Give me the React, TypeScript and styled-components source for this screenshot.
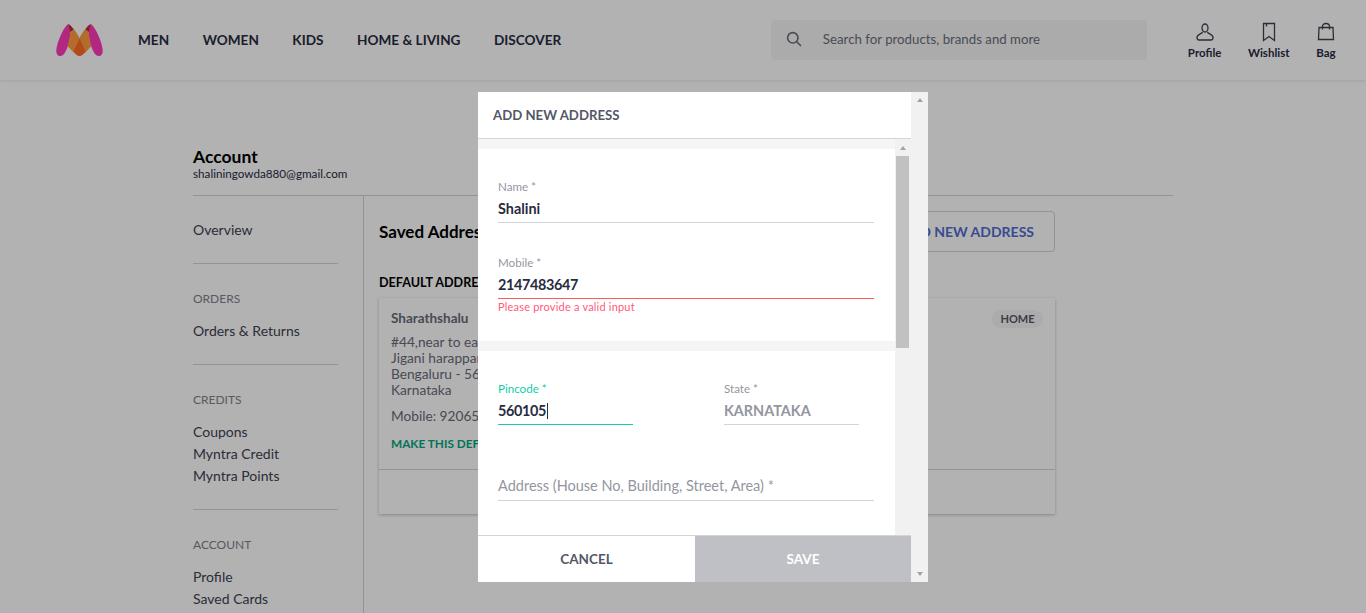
import React from 'react';
import styled, { createGlobalStyle } from 'styled-components';

const GlobalStyle = createGlobalStyle`
  html, body {
    margin: 0;
    height: 100%;
    overflow: hidden;
    background: #fff;
    color: #282c3f;
    font-family: Lato, "Open Sans", Arial, sans-serif;
  }
  * {
    box-sizing: border-box;
  }
`;

const Page = styled.div`
  height: 100vh;
  overflow: hidden;
`;

const Header = styled.header`
  display: flex;
  align-items: center;
  height: 80px;
  padding: 0 30px 0 56px;
  background: #fff;
  box-shadow: 0 1px 3px rgba(0, 0, 0, 0.1);
`;

const Logo = styled.svg`
  width: 47px;
  height: 33px;
  flex: none;
  margin-top: 1px;
`;

const Nav = styled.nav`
  display: flex;
  gap: 33.5px;
  margin-left: 35px;
`;

const NavLink = styled.a`
  font-size: 13.6px;
  font-weight: 700;
  text-transform: uppercase;
  white-space: nowrap;
`;

const Search = styled.div`
  display: flex;
  align-items: center;
  gap: 21px;
  width: 376px;
  height: 40px;
  margin-left: auto;
  padding: 0 0 3px 15px;
  border-radius: 4px;
  background: #f5f5f6;
  color: #696e79;
  font-size: 13.25px;
`;

const Actions = styled.div`
  display: flex;
  gap: 26.5px;
  margin: 2px 0 0 41px;
`;

const Action = styled.div`
  display: flex;
  flex-direction: column;
  align-items: center;
  gap: 3px;
  font-size: 11.5px;
  font-weight: 700;
  line-height: 16px;
`;

const ActionIcon = styled.svg`
  width: 20px;
  height: 20px;
  fill: none;
  stroke: #3e4152;
  stroke-width: 1.3;
`;

const Container = styled.div`
  width: 980px;
  margin: 0 auto;
  padding-top: 67px;
`;

const AccountHead = styled.div`
  height: 49px;
  border-bottom: 1px solid #d4d5d9;
`;

const AccountTitle = styled.div`
  font-size: 17.5px;
  font-weight: 700;
  line-height: 20px;
  color: #000;
`;

const AccountEmail = styled.div`
  margin-top: -1px;
  font-size: 11.7px;
  line-height: 14px;
`;

const Columns = styled.div`
  display: grid;
  grid-template-columns: 171px 1fr;
`;

const Sidebar = styled.aside`
  padding: 23px 25px 40px 0;
  border-right: 1px solid #d4d5d9;
`;

const SideGroup = styled.div`
  padding-bottom: 22px;
  margin-bottom: 27px;
  border-bottom: 1px solid #d4d5d9;
`;

const SideHeading = styled.div`
  margin-bottom: 13px;
  color: #7e818c;
  font-size: 12px;
  line-height: 16px;
`;

const SideItem = styled.div`
  font-size: 14px;
  line-height: 22px;
  color: #3e4152;
`;

const Main = styled.main`
  width: 691px;
  padding: 15px 0 0 15px;
`;

const TitleRow = styled.div`
  display: flex;
  align-items: center;
  justify-content: space-between;
  margin-bottom: 23px;
`;

const MainTitle = styled.h1`
  margin: 0;
  font-size: 17px;
  font-weight: 700;
  color: #000;
`;

const AddButton = styled.button`
  height: 41px;
  padding: 0 20px;
  border: 1px solid #d4d5d9;
  border-radius: 4px;
  background: transparent;
  color: #526cd0;
  font: 700 14px Lato, sans-serif;
`;

const GroupLabel = styled.div`
  margin-bottom: 7px;
  font-size: 12.6px;
  font-weight: 700;
  line-height: 16px;
  color: #000;
`;

const Card = styled.section`
  position: relative;
  height: 216px;
  padding: 12px;
  box-shadow: 0 1px 3px rgba(0, 0, 0, 0.25);
`;

const CardName = styled.div`
  margin-bottom: 8px;
  font-size: 13.5px;
  font-weight: 700;
  line-height: 16px;
  color: #696b79;
`;

const CardLine = styled.div`
  font-size: 13.7px;
  line-height: 16px;
  color: #696b79;
`;

const CardMobile = styled(CardLine)`
  margin-top: 10px;
`;

const MakeDefault = styled.div`
  margin-top: 12px;
  font-size: 11.8px;
  font-weight: 700;
  line-height: 16px;
  color: #03a685;
`;

const CardFooter = styled.div`
  position: absolute;
  left: 0;
  right: 0;
  bottom: 0;
  height: 45px;
  border-top: 1px solid #d4d5d9;
`;

const Tag = styled.span`
  position: absolute;
  top: 12px;
  right: 12px;
  padding: 0 8.5px;
  border-radius: 9px;
  background: #f5f5f6;
  font-size: 11px;
  font-weight: 700;
  line-height: 18px;
  color: #535766;
`;

const Overlay = styled.div`
  position: fixed;
  inset: 0;
  background: rgba(0, 0, 0, 0.3);
`;

const Modal = styled.div`
  position: absolute;
  top: 92px;
  left: 478px;
  display: flex;
  width: 450px;
  height: 490px;
  background: #fff;
`;

const ModalColumn = styled.div`
  display: flex;
  flex-direction: column;
  width: 433px;
`;

const ModalHead = styled.div`
  display: flex;
  align-items: center;
  flex: none;
  height: 47px;
  padding-left: 15px;
  border-bottom: 1px solid #d4d5d9;
  color: #535766;
  font-size: 13.2px;
  font-weight: 700;
`;

const ModalBody = styled.div`
  display: flex;
  flex: 1;
  min-height: 0;
`;

const Sections = styled.div`
  display: flex;
  flex-direction: column;
  gap: 10px;
  flex: 1;
  padding-top: 10px;
  overflow: hidden;
  background: #f5f5f6;
`;

const Section = styled.div<{ $height?: number; $top: number }>`
  flex: ${props => (props.$height ? 'none' : 1)};
  height: ${props => (props.$height ? `${props.$height}px` : 'auto')};
  padding: ${props => props.$top}px 21px 0 20px;
  background: #fff;
`;

const Field = styled.div<{ $width?: number; $gap?: number }>`
  width: ${props => (props.$width ? `${props.$width}px` : '100%')};
  margin-bottom: ${props => props.$gap ?? 0}px;
`;

const FieldLabel = styled.div<{ $focused?: boolean }>`
  height: 14px;
  font-size: 11.6px;
  line-height: 14px;
  color: ${props => (props.$focused ? '#14cda8' : '#94969f')};
`;

const FieldValue = styled.div<{
  $muted?: boolean;
  $empty?: boolean;
  $focused?: boolean;
  $error?: boolean;
  $numeric?: boolean;
}>`
  display: flex;
  align-items: center;
  height: 29px;
  padding: ${props => (props.$empty ? '0 0 1px' : '1px 0 0')};
  border-bottom: 1px solid
    ${props => (props.$error ? '#ff5a5a' : props.$focused ? '#14cda8' : '#d4d5d9')};
  color: ${props => (props.$empty || props.$muted ? '#94969f' : '#282c3f')};
  font-size: ${props => (props.$empty ? 14.5 : 14.4)}px;
  font-weight: ${props => (props.$empty ? 400 : 700)};
  letter-spacing: ${props => (props.$numeric ? '-0.35px' : 0)};
`;

const Caret = styled.span`
  width: 1px;
  height: 16px;
  margin-left: 1px;
  background: #282c3f;
`;

const FieldError = styled.div`
  margin-top: 1px;
  font-size: 11px;
  line-height: 14px;
  letter-spacing: 0.2px;
  color: #ff5a7a;
`;

const FieldRow = styled.div`
  display: flex;
  gap: 91px;
  margin-bottom: 47px;
`;

const Track = styled.div<{ $width: number }>`
  position: relative;
  flex: none;
  width: ${props => props.$width}px;
  background: #f1f1f1;
`;

const Thumb = styled.div`
  position: absolute;
  top: 17px;
  left: 1px;
  right: 2px;
  height: 192px;
  background: #c1c1c1;
`;

const Arrow = styled.span<{ $down?: boolean; $top: number }>`
  position: absolute;
  left: 50%;
  top: ${props => (props.$top >= 0 ? `${props.$top}px` : 'auto')};
  bottom: ${props => (props.$top < 0 ? `${-props.$top}px` : 'auto')};
  margin-left: -3px;
  border-left: 3.5px solid transparent;
  border-right: 3.5px solid transparent;
  border-bottom: ${props => (props.$down ? 0 : '4px solid #a3a3a3')};
  border-top: ${props => (props.$down ? '4px solid #a3a3a3' : 0)};
`;

const ModalFoot = styled.div`
  display: grid;
  grid-template-columns: 217px 1fr;
  flex: none;
  height: 47px;
  border-top: 1px solid #d4d5d9;
`;

const FootButton = styled.button<{ $primary?: boolean }>`
  border: 0;
  padding: 0;
  background: ${props => (props.$primary ? '#bfc0c6' : '#fff')};
  color: ${props => (props.$primary ? '#fff' : '#535766')};
  font: 700 13.5px Lato, sans-serif;
`;

const navLinks = ['Men', 'Women', 'Kids', 'Home & Living', 'Discover'];

const sideGroups = [
  { title: 'Orders', items: ['Orders & Returns'] },
  { title: 'Credits', items: ['Coupons', 'Myntra Credit', 'Myntra Points'] },
];

const addressLines = ['#44,near to east gate', 'Jigani harappanahalli', 'Bengaluru - 560105', 'Karnataka'];

export default function App() {
  return (
    <Page>
      <GlobalStyle />
      <Header>
        <Logo viewBox="0 0 47 33">
          <path d="M12.500 0C8 2 1 18 .3 26c-.3 4 1.700 6 3.700 6 4 0 6-5 8-10 2-6 3-14 2-19Z" fill="#ff3ab9" />
          <path d="M34.500 0c4.500 2 11.500 18 12.200 26 .3 4-1.700 6-3.700 6-4 0-6-5-8-10-2-6-3-14-2-19Z" fill="#ff3ab9" />
          <path d="M13.500 1c3.500 2 7.500 8 10 13L23.500 32c-3.500-1-8.500-6-12-10 2.500-7 3.500-14 2-21Z" fill="#ff9d40" />
          <path d="M33.500 1c-3.500 2-7.500 8-10 13v18c3.500-1 8.500-6 12-10-2.500-7-3.500-14-2-21Z" fill="#ff9d40" />
          <path d="M23.500 14c-2.500 6-4.500 10-6 13.500 2 2.500 4 4.500 6 4.500s4-2 6-4.500c-1.500-3.500-3.500-7.500-6-13.500Z" fill="#ff6b24" />
          <path d="M12.500 0c2 1 3.500 3 5 5.500L14 8c-.500-3-1-5.500-1.500-8Z" fill="#b82b47" />
          <path d="M34.500 0c-2 1-3.500 3-5 5.500L33 8c.500-3 1-5.500 1.500-8Z" fill="#b82b47" />
        </Logo>
        <Nav>
          {navLinks.map(link => (
            <NavLink key={link}>{link}</NavLink>
          ))}
        </Nav>
        <Search>
          <svg width="16" height="16" viewBox="0 0 16 16" fill="none" stroke="#696e79" strokeWidth="1.6">
            <circle cx="6.800" cy="6.800" r="5.200" />
            <path d="m10.700 10.700 4.300 4.300" />
          </svg>
          Search for products, brands and more
        </Search>
        <Actions>
          <Action>
            <ActionIcon viewBox="0 0 20 20">
              <ellipse cx="10" cy="6" rx="3" ry="4" />
              <path d="M7.500 10c-.500 2-5.500 2-5.500 5.500C2 17 3 18 4 18h12c1 0 2-1 2-2.500 0-3.500-5-3.500-5.500-5.500" />
            </ActionIcon>
            Profile
          </Action>
          <Action>
            <ActionIcon viewBox="0 0 20 20">
              <path d="M4.500 1.500h11v17L10 14.500l-5.500 4Z" />
              <path d="M7.500 1.500v3" />
            </ActionIcon>
            Wishlist
          </Action>
          <Action>
            <ActionIcon viewBox="0 0 20 20">
              <path d="M3 5.500h14l.500 12h-15Z" />
              <path d="M6.500 7.500v-3c0-2 1.500-3 3.500-3s3.500 1 3.500 3v3" />
            </ActionIcon>
            Bag
          </Action>
        </Actions>
      </Header>

      <Container>
        <AccountHead>
          <AccountTitle>Account</AccountTitle>
          <AccountEmail>shaliningowda880@gmail.com</AccountEmail>
        </AccountHead>
        <Columns>
          <Sidebar>
            <SideGroup>
              <SideItem>Overview</SideItem>
            </SideGroup>
            {sideGroups.map(group => (
              <SideGroup key={group.title}>
                <SideHeading>{group.title.toUpperCase()}</SideHeading>
                {group.items.map(item => (
                  <SideItem key={item}>{item}</SideItem>
                ))}
              </SideGroup>
            ))}
            <SideHeading>ACCOUNT</SideHeading>
            <SideItem>Profile</SideItem>
            <SideItem>Saved Cards</SideItem>
          </Sidebar>
          <Main>
            <TitleRow>
              <MainTitle>Saved Addresses</MainTitle>
              <AddButton>+ ADD NEW ADDRESS</AddButton>
            </TitleRow>
            <GroupLabel>DEFAULT ADDRESS</GroupLabel>
            <Card>
              <Tag>HOME</Tag>
              <CardName>Sharathshalu</CardName>
              {addressLines.map(line => (
                <CardLine key={line}>{line}</CardLine>
              ))}
              <CardMobile>Mobile: 9206512345</CardMobile>
              <MakeDefault>MAKE THIS DEFAULT</MakeDefault>
              <CardFooter />
            </Card>
          </Main>
        </Columns>
      </Container>

      <Overlay>
        <Modal>
          <ModalColumn>
            <ModalHead>ADD NEW ADDRESS</ModalHead>
            <ModalBody>
              <Sections>
                <Section $height={192} $top={31}>
                  <Field $gap={33}>
                    <FieldLabel>Name *</FieldLabel>
                    <FieldValue>Shalini</FieldValue>
                  </Field>
                  <Field>
                    <FieldLabel>Mobile *</FieldLabel>
                    <FieldValue $error $numeric>2147483647</FieldValue>
                    <FieldError>Please provide a valid input</FieldError>
                  </Field>
                </Section>
                <Section $top={31}>
                  <FieldRow>
                    <Field $width={135}>
                      <FieldLabel $focused>Pincode *</FieldLabel>
                      <FieldValue $focused $numeric>
                        560105
                        <Caret />
                      </FieldValue>
                    </Field>
                    <Field $width={135}>
                      <FieldLabel>State *</FieldLabel>
                      <FieldValue $muted>KARNATAKA</FieldValue>
                    </Field>
                  </FieldRow>
                  <Field>
                    <FieldValue $empty>Address (House No, Building, Street, Area) *</FieldValue>
                  </Field>
                </Section>
              </Sections>
              <Track $width={16}>
                <Arrow $top={7} />
                <Thumb />
              </Track>
            </ModalBody>
            <ModalFoot>
              <FootButton>CANCEL</FootButton>
              <FootButton $primary>SAVE</FootButton>
            </ModalFoot>
          </ModalColumn>
          <Track $width={17}>
            <Arrow $top={6} />
            <Arrow $down $top={-6} />
          </Track>
        </Modal>
      </Overlay>
    </Page>
  );
}
